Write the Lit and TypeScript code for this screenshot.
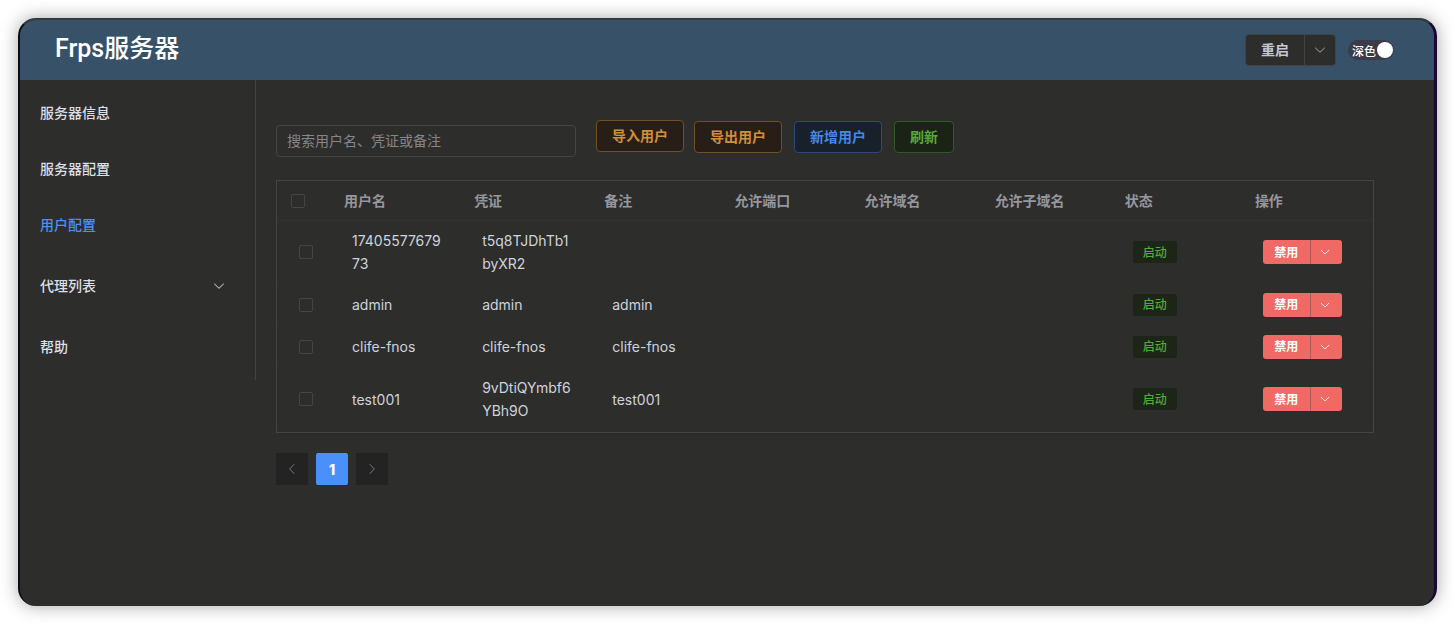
import { LitElement, html, css, svg, nothing } from "lit";
import { customElement, property, state } from "lit/decorators.js";
import { classMap } from "lit/directives/class-map.js";

const chevron = (d: string) => html`<svg class="chev" viewBox="0 0 14 14" aria-hidden="true">${svg`<path d=${d} fill="none" stroke="currentColor" stroke-width="1" stroke-linecap="round" stroke-linejoin="round"></path>`}</svg>`;
const DOWN = "M2.5 5 L7 9.3 L11.5 5";
const LEFT = "M9 2.5 L4.7 7 L9 11.5";
const RIGHT = "M5 2.5 L9.3 7 L5 11.5";

interface User { name: string; token: string; note: string }

const USERS: User[] = [
  { name: "1740557767973", token: "t5q8TJDhTb1byXR2", note: "" },
  { name: "admin", token: "admin", note: "admin" },
  { name: "clife-fnos", token: "clife-fnos", note: "clife-fnos" },
  { name: "test001", token: "9vDtiQYmbf6YBh9O", note: "test001" },
];

const shared = css`
  * { box-sizing: border-box; }
  button, input { font: inherit; }
  button { cursor: pointer; }
  .chev { width: 14px; height: 14px; display: block; }
`;

@customElement("split-button")
class SplitButton extends LitElement {
  @property() label = "";
  @property() kind = "plain";
  static styles = [shared, css`
    :host { display: inline-flex; vertical-align: middle; }
    .group { display: flex; }
    button { display: flex; align-items: center; justify-content: center; margin: 0; font-weight: 700; }
    .plain button { height: 32px; border: 1px solid #424243; background: #2d2d2c; color: #c3c7d0; font-size: 14px; padding: 0 0 2px; }
    .plain .main { width: 60px; border-radius: 4px 0 0 4px; }
    .plain .more { width: 32px; padding: 0; margin-left: -1px; border-radius: 0 4px 4px 0; color: #a3a6ad; }
    .danger button { height: 24px; border: 0; background: #f06964; color: #fff; font-size: 12px; padding: 0; }
    .danger .main { width: 47px; border-radius: 3px 0 0 3px; }
    .danger .more { width: 32px; padding-right: 2px; border-left: 1px solid #a9605d; border-radius: 0 3px 3px 0; }
    .danger .chev { width: 12px; height: 12px; }
  `];
  render() {
    return html`<div class="group ${this.kind}">
      <button class="main" type="button">${this.label}</button>
      <button class="more" type="button" aria-label="更多">${chevron(DOWN)}</button>
    </div>`;
  }
}

@customElement("side-menu")
class SideMenu extends LitElement {
  @state() private current = "用户配置";
  static styles = [shared, css`
    :host { display: block; }
    nav { min-height: 300px; padding: 5px 0; border-right: 1px solid #414243; display: flex; flex-direction: column; }
    a { height: 56px; padding: 0 29px 2px 20px; display: flex; align-items: center; justify-content: space-between;
      color: #dcdfe6; text-decoration: none; font-size: 14px; font-weight: 500; }
    a.active { color: #4a90fa; }
    a.parent { margin: 5px 0; }
    .chev { margin-top: 2px; }
  `];
  render() {
    return html`<nav>${["服务器信息", "服务器配置", "用户配置", "代理列表", "帮助"].map((t) => html`
      <a href="#" class=${classMap({ active: t === this.current, parent: t === "代理列表" })}
        @click=${(e: Event) => { e.preventDefault(); this.current = t; }}>${t}${t === "代理列表" ? chevron(DOWN) : nothing}</a>`)}
    </nav>`;
  }
}

@customElement("user-table")
class UserTable extends LitElement {
  static styles = [shared, css`
    :host { display: block; border: 1px solid #434348; padding-bottom: 1px; }
    table { width: 100%; table-layout: fixed; border-collapse: separate; border-spacing: 0; font-size: 14px; line-height: 23px; }
    .c-check { width: 55px; }
    th { height: 40px; padding: 0 12px; text-align: left; font-weight: 700; color: #96969d; border-bottom: 1px solid #31312f; }
    td { height: 42px; padding: 8px 20px; color: #cfd3dc; border-bottom: 1px solid #2f2f2e; word-break: break-all; vertical-align: middle; }
    th:first-child { padding: 0 14px; }
    td:first-child { padding: 0 22px; }
    input { appearance: none; display: block; width: 14px; height: 14px; margin: 0; border: 1px solid #454547; border-radius: 2px; background: transparent; }
    input:checked { background: #4a90fa; }
    td.fit { padding-top: 0; padding-bottom: 0; }
    .tag { display: flex; align-items: center; justify-content: center; width: 44px; height: 22px; border-radius: 3px; background: #1c2518; color: #55a83a; font-size: 12px; font-weight: 500; }
    split-button { display: flex; }
  `];
  render() {
    const heads = ["用户名", "凭证", "备注", "允许端口", "允许域名", "允许子域名", "状态", "操作"];
    return html`<table>
      <colgroup><col class="c-check" /></colgroup>
      <thead><tr><th><input type="checkbox" aria-label="全选" /></th>${heads.map((h) => html`<th>${h}</th>`)}</tr></thead>
      <tbody>${USERS.map((u) => html`<tr>
        <td><input type="checkbox" aria-label=${u.name} /></td>
        <td>${u.name}</td><td>${u.token}</td><td>${u.note}</td><td></td><td></td><td></td>
        <td class="fit"><span class="tag">启动</span></td>
        <td class="fit"><split-button kind="danger" label="禁用"></split-button></td>
      </tr>`)}</tbody>
    </table>`;
  }
}

@customElement("app-root")
class AppRoot extends LitElement {
  static styles = [shared, css`
    :host { display: flex; min-height: 100vh; padding: 18px; background: #fff; box-sizing: border-box;
      font-family: Inter, "Noto Sans CJK SC", sans-serif; font-size: 14px; color: #cfd3dc; }
    .window { flex: 1; display: flex; flex-direction: column; border-radius: 18px; overflow: hidden; background: #2d2d2c;
      border: solid; border-width: 2px 3px 0 2px; border-color: #343a3b #1a0733 #2d2d2c #0d0e14;
      box-shadow: 0 0 18px rgba(0, 0, 0, 0.35); }
    header { height: 60px; background: #375169; padding: 0 40px 0 35px; display: flex; align-items: center; }
    h1 { margin: 0 auto 0 0; padding-bottom: 2px; font-family: Roboto, "Noto Sans CJK SC", sans-serif; font-size: 25px; line-height: 32px; font-weight: 500; color: #fff; }
    .switch { margin-left: 12px; width: 46px; height: 20px; border-radius: 10px; background: #3b3b4a; display: flex; align-items: center;
      justify-content: space-between; padding: 0 1px 0 4px; font-size: 12px; font-weight: 500; color: #fff; white-space: nowrap; }
    .switch input { appearance: none; flex: none; width: 16px; height: 16px; margin: 0; border-radius: 50%; background: #fff; }
    .body { flex: 1; display: flex; }
    side-menu { width: 236px; flex: none; }
    main { flex: 1; min-width: 0; padding: 40px 60px 20px 20px; }
    .tools { display: flex; align-items: flex-start; margin-bottom: 23px; }
    .search { width: 300px; height: 32px; margin: 5px 20px 0 0; padding: 0 10px 2px; border: 1px solid #454549; border-radius: 4px; background: transparent; color: #cfd3dc; outline: none; }
    .search::placeholder { color: #85868a; opacity: 1; }
    .actions { display: flex; align-items: flex-end; gap: 12px; height: 33px; }
    .btn { height: 32px; padding: 0 15px 2px; border: 1px solid; border-radius: 4px; font-weight: 700; white-space: nowrap; }
    .btn { width: 88px; padding-left: 0; padding-right: 0; }
    .warn { color: #d08f39; background: #271f17; border-color: #704f22; }
    .warn:first-child { margin-right: -2px; align-self: flex-start; }
    .prim { color: #4686ea; background: #18202a; border-color: #2a4a7c; }
    .succ { width: 60px; color: #55a83a; background: #1b2317; border-color: #2f5a23; }
    .pages { display: flex; gap: 8px; margin-top: 20px; }
    .pages button { width: 32px; height: 32px; padding: 0; border: 0; border-radius: 2px; background: #222322; color: #77787a; display: flex; align-items: center; justify-content: center; }
    .pages .on { background: #4a90fa; color: #fff; font-weight: 800; }
  `];
  render() {
    return html`<div class="window">
      <header>
        <h1>Frps服务器</h1>
        <split-button label="重启"></split-button>
        <label class="switch">深色<input type="checkbox" role="switch" checked /></label>
      </header>
      <div class="body">
        <side-menu></side-menu>
        <main>
          <div class="tools">
            <input class="search" type="text" placeholder="搜索用户名、凭证或备注" aria-label="搜索用户名、凭证或备注" />
            <div class="actions">
              <button class="btn warn" type="button">导入用户</button>
              <button class="btn warn" type="button">导出用户</button>
              <button class="btn prim" type="button">新增用户</button>
              <button class="btn succ" type="button">刷新</button>
            </div>
          </div>
          <user-table></user-table>
          <div class="pages">
            <button type="button" aria-label="上一页">${chevron(LEFT)}</button>
            <button type="button" class="on">1</button>
            <button type="button" aria-label="下一页">${chevron(RIGHT)}</button>
          </div>
        </main>
      </div>
    </div>`;
  }
}
